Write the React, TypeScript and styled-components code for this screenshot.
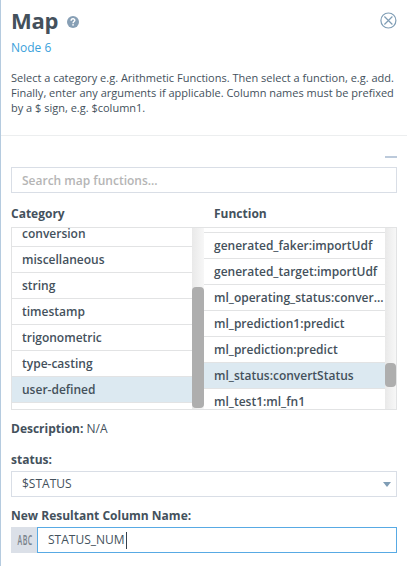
import React from "react";
import styled, { createGlobalStyle } from "styled-components";

const GlobalStyle = createGlobalStyle`
  * { box-sizing: border-box; }
  body {
    margin: 0;
    background: #fff;
    color: #44515c;
    font-family: "Open Sans", sans-serif;
    font-size: 13px;
  }
`;

const Panel = styled.main`
  width: 407px;
  height: 566px;
  overflow: hidden;
  background: #fff;
  border-left: 1px solid #b5cbdf;
`;

const Header = styled.header`
  height: 136px;
  padding: 4px 9px 0 10px;
  border-bottom: 1px solid #eceeef;
`;

const TitleBar = styled.div`
  display: flex;
  align-items: center;
  height: 32px;
  margin-bottom: 1px;
`;

const Title = styled.h1`
  margin: 0 9px 0 0;
  font-size: 22px;
  font-weight: 700;
  line-height: 32px;
  letter-spacing: -0.3px;
`;

const IconButton = styled.button<{ $push?: boolean }>`
  display: flex;
  padding: 0;
  border: 0;
  background: none;
  margin: ${(p) => (p.$push ? "0 1px 0 auto" : "4px 0 0")};
`;

const NodeName = styled.div`
  height: 22px;
  line-height: 21px;
  font-size: 12px;
  color: #3a9fdb;
`;

const Hint = styled.p`
  margin: 11px 0 0;
  font-size: 11px;
  line-height: 15px;
  white-space: nowrap;
`;

const HintLine = styled.span`
  display: block;
`;

const Body = styled.section`
  width: 396px;
  padding: 0 0 0 10px;
`;

const CollapseBar = styled.div`
  display: flex;
  justify-content: flex-end;
  height: 31px;
  padding-top: 20px;
`;

const Dash = styled.span`
  width: 12px;
  height: 2px;
  background: #bccadb;
`;

const Field = styled.div`
  display: flex;
  align-items: center;
  height: 26px;
  padding: 0 5px 0 10px;
  border: 1px solid #d9dee6;
`;

const Placeholder = styled.span`
  font-size: 12px;
  font-weight: 600;
  line-height: 25px;
  padding-top: 1px;
  color: #b5b5b5;
`;

const Headings = styled.div`
  display: grid;
  grid-template-columns: 203px 1fr;
  height: 34px;
  line-height: 41px;
`;

const Label = styled.span`
  font-size: 12px;
  font-weight: 700;
`;

const Lists = styled.div`
  display: grid;
  grid-template-columns: 192px 192px;
  height: 183px;
  border: 1px solid #e2e3e4;
`;

const Column = styled.div<{ $track: number }>`
  display: grid;
  grid-template-columns: minmax(0, 1fr) ${(p) => p.$track}px;
  height: 181px;
  overflow: hidden;
`;

const Rows = styled.ul<{ $offset: number }>`
  list-style: none;
  padding: 0;
  margin: ${(p) => p.$offset}px 0 0;
`;

const Row = styled.li<{ $active?: boolean }>`
  height: 26px;
  padding-left: 10px;
  border-bottom: 1px solid #e2e3e4;
  background: ${(p) => (p.$active ? "#dce9f1" : "#fff")};
  font-size: 12px;
  font-weight: 600;
  line-height: 25px;
  white-space: nowrap;
`;

const Track = styled.div<{ $top: number }>`
  height: 181px;
  padding-top: ${(p) => p.$top}px;
  background: linear-gradient(90deg, #e9e9e9, #f7f7f7);
`;

const Thumb = styled.div<{ $height: number }>`
  height: ${(p) => p.$height}px;
  border-radius: 4px;
  background: #aeaeae;
`;

const Description = styled.div`
  height: 38px;
  line-height: 38px;
  font-size: 12px;
`;

const LabelRow = styled.div<{ $height: number; $line: number }>`
  height: ${(p) => p.$height}px;
  line-height: ${(p) => p.$line}px;
`;

const Value = styled.span`
  font-size: 12px;
  font-weight: 400;
  line-height: 24px;
`;

const Arrow = styled.svg`
  margin-left: auto;
`;

const InputGroup = styled.div`
  display: flex;
  height: 26px;
`;

const TypeTag = styled.span`
  display: flex;
  align-items: center;
  justify-content: center;
  width: 26px;
  padding-left: 3px;
  background: #dbe0e8;
`;

const TypeText = styled.span`
  flex: none;
  font-size: 15px;
  font-weight: 600;
  line-height: 24px;
  margin-top: -2px;
  letter-spacing: 1px;
  color: #79828b;
  transform: scaleX(0.47);
`;

const FocusedField = styled(Field)`
  flex: 1;
  border-color: #58aae4;
`;

const Caret = styled.span`
  width: 1px;
  height: 17px;
  margin-left: 1px;
  background: #35424e;
`;

type Item = { name: string; active?: boolean };

const categories: Item[] = [
  { name: "conversion" },
  { name: "miscellaneous" },
  { name: "string" },
  { name: "timestamp" },
  { name: "trigonometric" },
  { name: "type-casting" },
  { name: "user-defined", active: true },
];

const functions: Item[] = [
  { name: "generated_faker:importUdf" },
  { name: "generated_target:importUdf" },
  { name: "ml_operating_status:conver..." },
  { name: "ml_prediction1:predict" },
  { name: "ml_prediction:predict" },
  { name: "ml_status:convertStatus", active: true },
  { name: "ml_test1:ml_fn1" },
];

type ListProps = {
  items: Item[];
  offset: number;
  top: number;
  height: number;
  track: number;
  leadingRow?: boolean;
};

const PickList = ({ items, offset, top, height, track, leadingRow }: ListProps) => (
  <Column $track={track}>
    <Rows $offset={offset}>
      {leadingRow && <Row aria-hidden />}
      {items.map((item) => (
        <Row key={item.name} $active={item.active}>
          {item.name}
        </Row>
      ))}
    </Rows>
    <Track $top={top}>
      <Thumb $height={height} />
    </Track>
  </Column>
);

export default function App() {
  return (
    <>
      <GlobalStyle />
      <Panel>
        <Header>
          <TitleBar>
            <Title>Map</Title>
            <IconButton aria-label="Help">
              <svg width="12" height="12" viewBox="0 0 12 12">
                <circle cx="6" cy="6" r="6" fill="#879fb5" />
                <path d="M4.1 4.7C4.2 2.1 8 2.3 7.8 4.4C7.7 5.5 6.1 5.7 6.1 7.2" fill="none" stroke="#fff" strokeWidth="1.4" />
                <rect x="5.3" y="8.1" width="1.5" height="1.5" fill="#fff" />
              </svg>
            </IconButton>
            <IconButton $push aria-label="Close">
              <svg width="17" height="17" viewBox="0 0 17 17" fill="none" stroke="#7f9db5">
                <circle cx="8.4" cy="8.5" r="7.5" strokeWidth="1.2" />
                <path d="M4.4 4.5L12.4 12.5M12.4 4.5L4.4 12.5" strokeWidth="1.2" />
              </svg>
            </IconButton>
          </TitleBar>
          <NodeName>Node 6</NodeName>
          <Hint>
            <HintLine>Select a category e.g. Arithmetic Functions. Then select a function, e.g. add.</HintLine>
            <HintLine>Finally, enter any arguments if applicable. Column names must be prefixed</HintLine>
            <HintLine>by a $ sign, e.g. $column1.</HintLine>
          </Hint>
        </Header>
        <Body>
          <CollapseBar>
            <Dash />
          </CollapseBar>
          <Field>
            <Placeholder>Search map functions...</Placeholder>
          </Field>
          <Headings>
            <Label>Category</Label>
            <Label>Function</Label>
          </Headings>
          <Lists>
            <PickList items={categories} offset={-7} top={59} height={121} track={12} />
            <PickList items={functions} offset={-21} top={135} height={24} track={11} leadingRow />
          </Lists>
          <Description>
            <Label>Description:</Label> N/A
          </Description>
          <LabelRow $height={23} $line={23}>
            <Label>status:</Label>
          </LabelRow>
          <Field>
            <Value>$STATUS</Value>
            <Arrow width="8" height="5" viewBox="0 0 8 5">
              <path d="M0 0H8L4 5Z" fill="#7f9db5" />
            </Arrow>
          </Field>
          <LabelRow $height={30} $line={37}>
            <Label>New Resultant Column Name:</Label>
          </LabelRow>
          <InputGroup>
            <TypeTag>
              <TypeText>ABC</TypeText>
            </TypeTag>
            <FocusedField>
              <Value>STATUS_NUM</Value>
              <Caret />
            </FocusedField>
          </InputGroup>
        </Body>
      </Panel>
    </>
  );
}
